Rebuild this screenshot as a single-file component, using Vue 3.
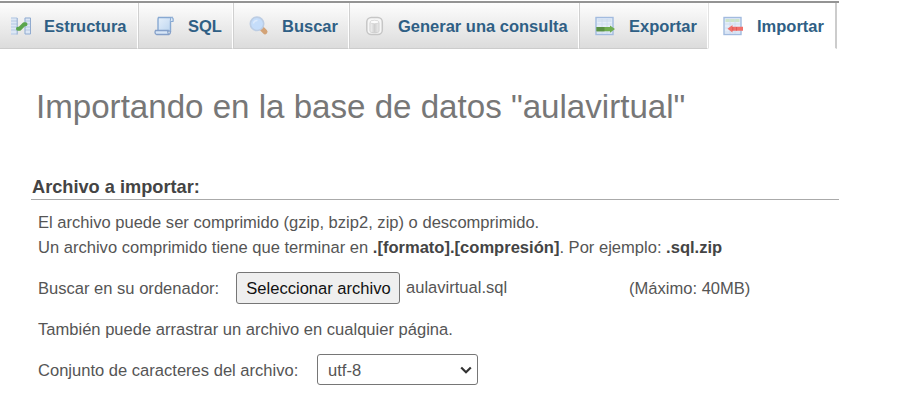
<script setup>
const tabs = [
  { id: 'structure', label: 'Estructura', width: 138 },
  { id: 'sql', label: 'SQL', width: 95 },
  { id: 'search', label: 'Buscar', width: 116 },
  { id: 'query', label: 'Generar una consulta', width: 230 },
  { id: 'export', label: 'Exportar', width: 129 },
  { id: 'import', label: 'Importar', width: 129, active: true },
]
</script>

<template>
  <main class="page">
    <nav class="tabs">
      <a v-for="t in tabs" :key="t.id" class="tab" :class="[t.id, { active: t.active }]" :style="{ width: t.width + 'px' }">
        <svg class="icon" viewBox="0 0 20 20">
          <defs>
            <linearGradient id="paper" x1="0" y1="0" x2="1" y2="1">
              <stop offset="0" stop-color="#e6f0fb" />
              <stop offset="1" stop-color="#bcd5ef" />
            </linearGradient>
            <linearGradient id="steel" x1="0" y1="0" x2="1" y2="0">
              <stop offset="0" stop-color="#f6f6f6" />
              <stop offset=".5" stop-color="#cfcfcf" />
              <stop offset="1" stop-color="#ededed" />
            </linearGradient>
          </defs>
          <g v-if="t.id === 'structure'">
            <path d="M0 1.5h6.500v17H0zM13.500 1.500H20v17h-6.500z" fill="#dce7f5" />
            <path d="M0 2h6M0 5h6M0 8h6M0 11h6M0 14h6M0 18h6M14 5h5M14 8h5M14 11h5M14 14h5" fill="none" stroke="#b5c8e2" />
            <path d="M6.200 2v16.500M14 2h5.500v16H14z" fill="none" stroke="#91abcf" />
            <path d="M7 12.800h1.500L13 8.300h1.500" fill="none" stroke="#5aa54c" stroke-width="4" stroke-linecap="round" stroke-linejoin="round" />
          </g>
          <g v-else-if="t.id === 'sql'">
            <path d="M4.500 1.500h13c-1 1-1 2-1 3.500v10H4V4c0-1 0-2 .5-2.500z" fill="url(#paper)" stroke="#88a9d2" stroke-width="1.400" />
            <path d="M16.500 5.500h2.500c.5-2.500 0-4-1.500-4" fill="#dce9f7" stroke="#88a9d2" stroke-width="1.200" />
            <path d="M1.500 14.500H14c-.5 1.500 0 3.500 1.200 4H2.500C.8 18 .7 16 1.500 14.500zM15 18.500c1.500-.5 1.500-2 1.500-3.500" fill="#d7e6f7" stroke="#849fc8" stroke-width="1.300" />
          </g>
          <g v-else-if="t.id === 'search'">
            <path d="M13 12.800l3 3" stroke="#d3a377" stroke-width="5" stroke-linecap="round" />
            <circle cx="8" cy="7.800" r="6.700" fill="#c5ddfa" stroke="#bccde4" stroke-width="1.600" />
            <path d="M4.500 7.500a3.500 3.500 0 0 1 4-3" fill="none" stroke="#deebfc" stroke-width="1.500" />
          </g>
          <g v-else-if="t.id === 'query'">
            <rect x="1.800" y="1.500" width="15.500" height="17" rx="4.500" fill="#f6f6f6" stroke="#c6c6c6" stroke-width="1.500" />
            <path d="M5 6.500v9c1 1.700 8 1.700 9 0v-9" fill="url(#steel)" stroke="#c8c8c8" stroke-width=".8" />
            <ellipse cx="9.500" cy="6" rx="4.500" ry="1.700" fill="#fcfcfc" stroke="#d0d0d0" stroke-width=".7" />
          </g>
          <g v-else>
            <rect x="1" y="1.500" width="17" height="17" fill="#e4edf9" stroke="#a2bbdf" stroke-width="1.400" />
            <path d="M2.500 3h14v3h-14z" :fill="t.id === 'export' ? '#d5e2f1' : '#cde4c9'" />
            <path d="M2 8h15M2 12h15M2 16h15M7 3v15M12 3v15" stroke="#cbdbef" stroke-width=".8" />
            <path v-if="t.id === 'export'" d="M1.500 11h13.500V9.500l5 3.600-5 3.700v-1.500H1.500z" fill="#70ad51" />
            <path v-if="t.id === 'export'" d="M1.500 11h8v4.300h-8z" fill="#5a9146" />
            <path v-if="t.id === 'import'" d="M20 10.700H9.500V9L4.500 12.800l5 3.700v-1.700H20z" fill="#f0706b" />
            <path v-if="t.id === 'import'" d="M9.800 11v3.600M13.500 11v3.600" stroke="#dc5656" stroke-width=".9" />
          </g>
        </svg>
        <span class="label">{{ t.label }}</span>
      </a>
    </nav>

    <h1>Importando en la base de datos "aulavirtual"</h1>

    <section class="group">
      <h2>Archivo a importar:</h2>
      <div class="body">
        <p class="help">El archivo puede ser comprimido (gzip, bzip2, zip) o descomprimido.<br />Un archivo comprimido tiene que terminar en <b>.[formato].[compresión]</b>. Por ejemplo: <b>.sql.zip</b></p>
        <div class="row file">
          <label>Buscar en su ordenador:</label>
          <button type="button">Seleccionar archivo</button>
          <span class="name">aulavirtual.sql</span>
          <span class="max">(Máximo: 40MB)</span>
        </div>
        <p class="drag">También puede arrastrar un archivo en cualquier página.</p>
        <div class="row charset">
          <label>Conjunto de caracteres del archivo:</label>
          <div class="select" role="combobox">
            <span>utf-8</span>
            <svg viewBox="0 0 12 8"><path d="M1.200 1.500L6 6.200l4.800-4.700" fill="none" stroke="#333" stroke-width="2.200" /></svg>
          </div>
        </div>
      </div>
    </section>
  </main>
</template>

<style>
body {
  background: #fff;
}
</style>

<style scoped>
.page {
  width: 839px;
  height: 415px;
  overflow: hidden;
  font-family: "Liberation Sans", Arial, sans-serif;
  font-size: 16.56px;
  color: #555;
}
.tabs {
  display: flex;
  box-sizing: border-box;
  height: 49px;
  margin-top: 1px;
  border-top: 2px solid #949494;
}
.tab {
  box-sizing: border-box;
  display: flex;
  align-items: center;
  flex: none;
  height: 46px;
  padding-left: 15px;
  border-right: 1px solid #fff;
  border-left: 1px solid #d0d0d0;
  border-bottom: 1px solid #ccc;
  background: linear-gradient(#fdfdfd, #dcdcdc);
  color: #2f5f85;
  font-size: 16.5px;
  font-weight: bold;
  white-space: nowrap;
}
.tab.structure {
  padding-left: 11px;
  border-left: 0;
}
.tab.active {
  padding-left: 14px;
  background: #fff;
  border-left-color: #e2e2e2;
  border-bottom-color: #fff;
  border-right: 2px solid #ccc;
}
.icon {
  flex: none;
  width: 20px;
  height: 20px;
  margin-right: 13px;
}
.label {
  padding-top: 2px;
}
.sql .label,
.export .label,
.import .label {
  padding-left: 1px;
}
h1 {
  margin: 37px 0 0 36px;
  font-size: 33.12px;
  line-height: 40px;
  font-weight: normal;
  color: #777;
  white-space: nowrap;
}
.group {
  margin: 49px 0 0 31px;
}
h2 {
  margin: 0;
  padding-bottom: 1px;
  border-bottom: 1px solid #aaa;
  font-size: 18.2px;
  line-height: 22px;
  color: #444;
  text-indent: 1px;
}
.body {
  padding-left: 7px;
  white-space: nowrap;
}
p {
  margin: 0;
}
.help {
  margin-top: 11px;
  line-height: 24.500px;
}
.help b {
  color: #444;
}
.row {
  display: flex;
  align-items: center;
}
.file {
  height: 32px;
  margin-top: 12px;
}
.file label {
  width: 198px;
}
.file label,
.max {
  padding-top: 2px;
}
button {
  box-sizing: border-box;
  width: 164px;
  height: 32px;
  padding: 2px 0 0 1px;
  border: 1px solid #767676;
  border-radius: 3px;
  background: #efefef;
  color: #111;
  font: inherit;
}
.name {
  width: 223px;
  margin-left: 6px;
}
.drag {
  margin-top: 15px;
  line-height: 22px;
}
.charset {
  height: 31px;
  margin-top: 13px;
}
.charset label {
  width: 279px;
  padding-top: 2px;
}
.select {
  box-sizing: border-box;
  display: flex;
  align-items: center;
  justify-content: space-between;
  width: 161px;
  height: 31px;
  padding: 0 5px 0 10px;
  border: 1px solid #767676;
  border-radius: 3px;
}
.select span {
  padding-top: 2px;
}
.select svg {
  width: 12px;
  height: 8px;
}
</style>
